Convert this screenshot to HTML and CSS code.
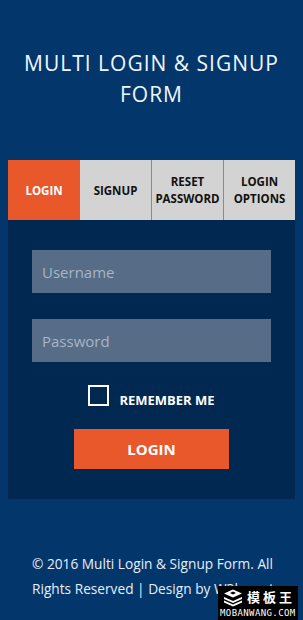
FILE: index.html
```html
<!DOCTYPE html>
<html>
<head>
<meta charset="utf-8">
<link rel="stylesheet" href="styles.css">
</head>
<body>
<h1 class="title">MULTI LOGIN &amp; SIGNUP FORM</h1>
<div class="box">
  <div class="tabs">
    <div class="tab active">LOGIN</div>
    <div class="tab">SIGNUP</div>
    <div class="tab">RESET PASSWORD</div>
    <div class="tab">LOGIN OPTIONS</div>
  </div>
  <div class="panel">
    <input class="field" type="text" placeholder="Username">
    <input class="field" type="password" placeholder="Password">
    <label class="remember"><span class="check"></span><span class="remember-text">REMEMBER ME</span></label>
    <button class="btn">LOGIN</button>
  </div>
</div>
<p class="footer">© 2016 Multi Login &amp; Signup Form. All Rights Reserved | Design by W3layouts</p>
<div class="wm">
  <svg class="wm-icon" width="22" height="20" viewBox="0 0 22 20">
    <path d="M2 9 L11 13 L20 9 L20 11 L11 15 L2 11 Z" fill="#fff"/>
    <path d="M2 12.5 L11 16.5 L20 12.5 L20 14.5 L11 18.5 L2 14.5 Z" fill="#fff"/>
    <path d="M2 5.5 L11 1.5 L20 5.5 L11 9.5 Z" fill="#fff"/>
    <path d="M8 5 L11 3.6 L14 5 L11 6.4 Z" fill="#000"/>
  </svg>
  <span class="wm-cn">模板王</span>
  <span class="wm-en">MOBANWANG.COM</span>
</div>
</body>
</html>
```
FILE: styles.css
```css
html, body {
  margin: 0;
  padding: 0;
}
body {
  background: #03366b;
  font-family: "Open Sans", "Noto Sans", sans-serif;
  width: 303px;
  height: 620px;
  overflow: hidden;
  position: relative;
}
.title {
  margin: 0;
  padding: 48px 16px 0;
  text-align: center;
  color: #f0f6ff;
  font-weight: 400;
  font-size: 21px;
  line-height: 31px;
  letter-spacing: 1px;
  height: 160px;
  box-sizing: border-box;
}
.box {
  margin: 0 8px;
}
.tabs {
  display: grid;
  grid-template-columns: 72px 71px 72px 72px;
  height: 60px;
  background: #d3d3d3;
}
.tab {
  display: flex;
  align-items: center;
  justify-content: center;
  text-align: center;
  font-weight: 700;
  font-size: 11.5px;
  line-height: 17px;
  color: #111;
  border-left: 1px solid #8a8a8a;
  padding: 0 1px;
}
.tab:nth-child(2) { border-left: none; }
.tab.active {
  background: #e8582a;
  color: #fff;
  border-left: none;
}
.panel {
  background: #002850;
  padding: 30px 24px 30px;
  display: flex;
  flex-direction: column;
  align-items: center;
}
.field {
  display: block;
  width: 239px;
  height: 43px;
  box-sizing: border-box;
  border: none;
  outline: none;
  background: #566c87;
  color: #fff;
  font-family: inherit;
  font-size: 15px;
  padding: 0 10px;
  margin: 0 0 26px;
}
.field::placeholder { color: #a7b6c8; }
.field + .field { margin-bottom: 23px; }
.remember {
  display: flex;
  align-items: flex-end;
  gap: 10px;
  height: 21px;
  color: #fff;
  font-weight: 700;
  font-size: 13px;
}
.remember-text {
  line-height: 13px;
  margin-bottom: -1px;
}
.check {
  width: 21px;
  height: 21px;
  box-sizing: border-box;
  border: 2px solid #fff;
}
.btn {
  margin-top: 23px;
  width: 155px;
  height: 40px;
  border: none;
  background: #e8582a;
  color: #fff;
  font-family: inherit;
  font-weight: 700;
  font-size: 15px;
}
.footer {
  margin: 52px 0 0;
  padding: 0 18px 0 32px;
  color: #e6eefa;
  font-size: 13.7px;
  line-height: 25px;
}
.wm {
  position: absolute;
  left: 218px;
  top: 586px;
  width: 80px;
  height: 34px;
  background: #000;
  color: #fff;
  white-space: nowrap;
}
.wm-icon {
  position: absolute;
  left: 4px;
  top: 2px;
}
.wm-cn {
  position: absolute;
  left: 29px;
  top: 1px;
  font-family: "Noto Sans CJK SC", sans-serif;
  font-weight: 700;
  font-size: 13px;
  letter-spacing: 3px;
  line-height: 20px;
}
.wm-en {
  position: absolute;
  left: 2px;
  top: 22px;
  font-family: "DejaVu Sans Mono", monospace;
  font-size: 9px;
  line-height: 10px;
  letter-spacing: 0.4px;
}
```
